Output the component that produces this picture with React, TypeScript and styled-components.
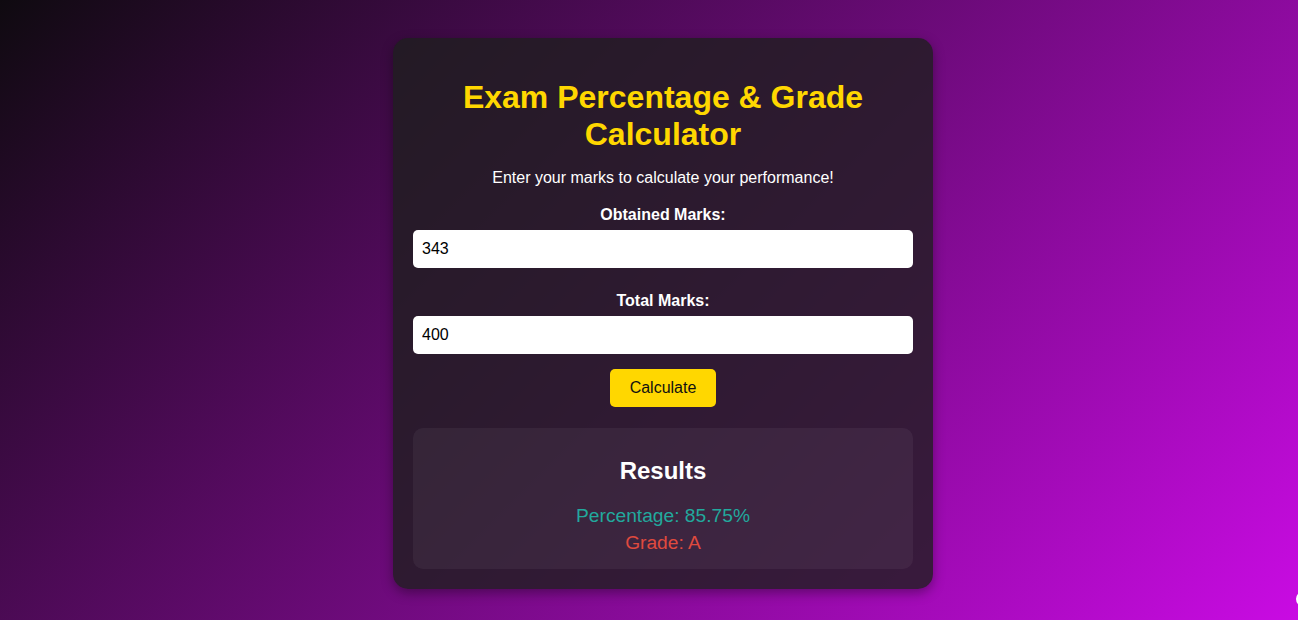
import React, { useState } from "react";
import styled, { createGlobalStyle } from "styled-components";

const GlobalStyle = createGlobalStyle`
  html, body {
    margin: 0;
    padding: 0;
  }
  body {
    font-family: "Liberation Sans", Arial, sans-serif;
    background: linear-gradient(135deg, #0f0a10 0%, #c90be3 100%);
    min-height: 100vh;
    overflow: hidden;
  }
  * { box-sizing: border-box; }
`;

const Page = styled.div`
  position: relative;
  min-height: 100vh;
  display: flex;
  justify-content: center;
  align-items: flex-start;
  padding: 38px 0 0 28px;
`;

const Card = styled.div`
  width: 540px;
  padding: 20px;
  border-radius: 15px;
  background: rgba(30, 30, 30, 0.8);
  box-shadow: 0 4px 12px rgba(0, 0, 0, 0.35);
  text-align: center;
  color: #ffffff;
`;

const Title = styled.h1`
  margin: 21px 0 16px;
  font-size: 32px;
  font-weight: bold;
  line-height: normal;
  color: #ffd700;
`;

const Subtitle = styled.p`
  margin: 0 0 18.7px;
  font-size: 16px;
  line-height: normal;
  color: #ffffff;
`;

const Label = styled.label`
  display: block;
  margin-bottom: 6px;
  font-size: 16px;
  font-weight: bold;
  line-height: normal;
  color: #ffffff;
`;

const Input = styled.input<{ $gap?: number }>`
  display: block;
  width: 100%;
  height: 38px;
  padding: 0 9px;
  margin: 0 0 ${(p) => p.$gap ?? 0}px;
  border: none;
  border-radius: 5px;
  background: #ffffff;
  color: #000000;
  font-family: "Liberation Sans", Arial, sans-serif;
  font-size: 16px;
  outline: none;
`;

const Button = styled.button`
  display: inline-block;
  height: 38px;
  margin-top: 15px;
  padding: 0 20px;
  border: none;
  border-radius: 5px;
  background: #ffd700;
  color: #111111;
  font-family: "Liberation Sans", Arial, sans-serif;
  font-size: 16px;
  cursor: pointer;
`;

const Results = styled.div`
  margin-top: 21px;
  padding: 15px;
  border-radius: 10px;
  background: rgba(255, 255, 255, 0.05);
`;

const ResultsTitle = styled.h2`
  margin: 14px 0 19.4px;
  font-size: 24px;
  font-weight: bold;
  line-height: normal;
  color: #ffffff;
`;

const ResultLine = styled.p<{ $color: string; $gap?: number }>`
  margin: 0 0 ${(p) => p.$gap ?? 0}px;
  font-size: 19.2px;
  line-height: 22px;
  color: ${(p) => p.$color};
`;

const EdgeDot = styled.div`
  position: absolute;
  left: 1296px;
  top: 591px;
  width: 16px;
  height: 16px;
  border-radius: 50%;
  background: #ffffff;
`;

function gradeFor(pct: number): string {
  if (pct >= 90) return "A+";
  if (pct >= 80) return "A";
  if (pct >= 70) return "B";
  if (pct >= 60) return "C";
  if (pct >= 50) return "D";
  return "F";
}

export default function App() {
  const [obtained, setObtained] = useState("343");
  const [total, setTotal] = useState("400");
  const [result, setResult] = useState({ pct: 85.75, grade: "A" });

  const calculate = () => {
    const o = parseFloat(obtained);
    const t = parseFloat(total);
    if (!isNaN(o) && !isNaN(t) && t > 0) {
      const pct = (o / t) * 100;
      setResult({ pct: Math.round(pct * 100) / 100, grade: gradeFor(pct) });
    }
  };

  return (
    <>
      <GlobalStyle />
      <Page>
        <Card>
          <Title>Exam Percentage &amp; Grade Calculator</Title>
          <Subtitle>Enter your marks to calculate your performance!</Subtitle>
          <Label htmlFor="obtained">Obtained Marks:</Label>
          <Input
            id="obtained"
            type="text"
            value={obtained}
            $gap={24.8}
            onChange={(e) => setObtained(e.target.value)}
          />
          <Label htmlFor="total">Total Marks:</Label>
          <Input
            id="total"
            type="text"
            value={total}
            onChange={(e) => setTotal(e.target.value)}
          />
          <Button onClick={calculate}>Calculate</Button>
          <Results>
            <ResultsTitle>Results</ResultsTitle>
            <ResultLine $color="#22a99d" $gap={5.5}>
              Percentage: {result.pct}%
            </ResultLine>
            <ResultLine $color="#e04a3e">Grade: {result.grade}</ResultLine>
          </Results>
        </Card>
        <EdgeDot />
      </Page>
    </>
  );
}
